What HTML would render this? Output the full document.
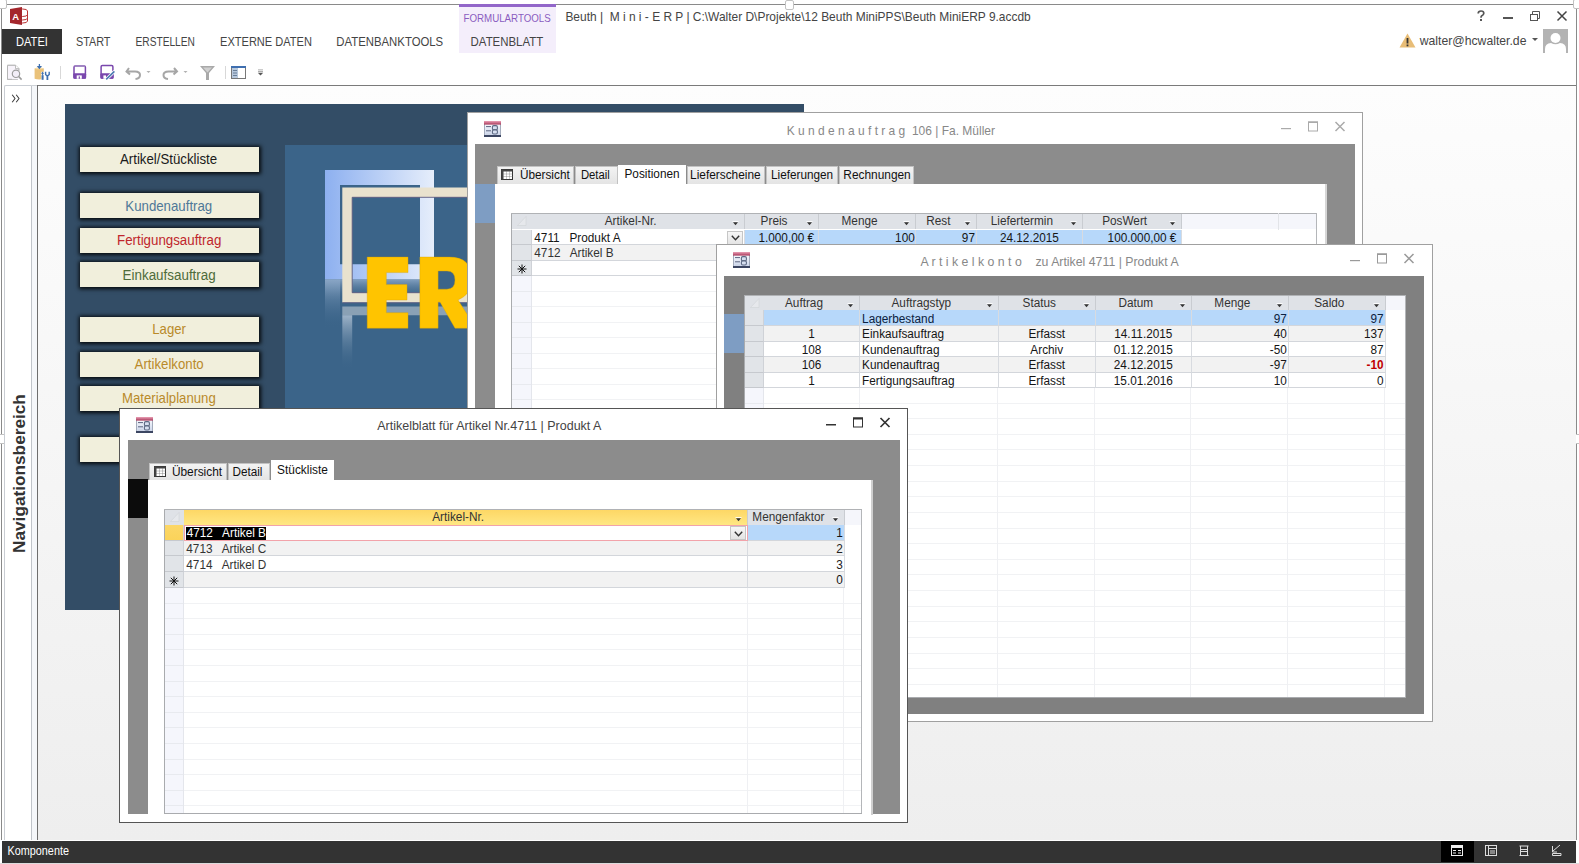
<!DOCTYPE html><html><head><meta charset="utf-8"><style>
*{margin:0;padding:0;box-sizing:border-box}
html,body{width:1579px;height:864px;overflow:hidden;background:#fff;font-family:"Liberation Sans",sans-serif;color:#222}
div{position:absolute}
svg{position:absolute}
.t{white-space:pre;transform-origin:0 0}
</style></head><body><div style="left:0px;top:4px;width:1578px;height:1px;background:#8a8a8a"></div><div style="left:1px;top:4px;width:1px;height:836px;background:#8a8a8a"></div><div style="left:1576px;top:4px;width:1px;height:836px;background:#8a8a8a"></div><div style="left:-3px;top:-1px;width:9.5px;height:10px;background:#fff;border:1.5px solid #c2c2c2;border-radius:2px"></div><div style="left:784.5px;top:-0.5px;width:9.5px;height:10px;background:#fff;border:1.5px solid #c2c2c2;border-radius:2px"></div><div style="left:1572.5px;top:-1px;width:9.5px;height:10px;background:#fff;border:1.5px solid #c2c2c2;border-radius:2px"></div><div style="left:-3px;top:433.5px;width:9.5px;height:10px;background:#fff;border:1.5px solid #c2c2c2;border-radius:2px"></div><div style="left:1572.5px;top:433.5px;width:9.5px;height:10px;background:#fff;border:1.5px solid #c2c2c2;border-radius:2px"></div><svg style="left:9px;top:6px" width="20" height="20" viewBox="0 0 20 20">
<ellipse cx="13.5" cy="5" rx="5" ry="2" fill="#fff" stroke="#b33" stroke-width="1"/>
<path d="M8.5 5 v10 a5 2 0 0 0 10 0 v-10" fill="#fff" stroke="#b33" stroke-width="1"/>
<path d="M8.5 8.5 a5 2 0 0 0 10 0 M8.5 12 a5 2 0 0 0 10 0" fill="none" stroke="#b33" stroke-width="1"/>
<path d="M1 3 L13 1 V19 L1 17 Z" fill="#a4262c"/>
<text x="3.3" y="13.5" font-family="Liberation Sans" font-weight="bold" font-size="9.5" fill="#fff">A</text>
</svg><svg style="left:0;top:0;overflow:visible" width="1" height="1"><text transform="translate(565.40,21.40) scale(0.9059,1.000)" font-family="Liberation Sans" font-size="13.2" fill="#444" style="white-space:pre">Beuth |  M i n i - E R P | C:\Walter D\Projekte\12 Beuth MiniPPS\Beuth MiniERP 9.accdb</text></svg><div style="left:459px;top:4px;width:97px;height:49px;background:#f4eefb"></div><div style="left:459px;top:4px;width:97px;height:3px;background:#9266c9"></div><svg style="left:0;top:0;overflow:visible" width="1" height="1"><text transform="translate(463.50,21.60) scale(0.9027,1.000)" font-family="Liberation Sans" font-size="10.8" fill="#8a5cc0" style="white-space:pre">FORMULARTOOLS</text></svg><div style="left:2px;top:29px;width:60px;height:25px;background:#333"></div><svg style="left:0;top:0;overflow:visible" width="1" height="1"><text transform="translate(16.00,46.00) scale(0.8892,1.000)" font-family="Liberation Sans" font-size="12.5" fill="#fff" style="white-space:pre">DATEI</text></svg><svg style="left:0;top:0;overflow:visible" width="1" height="1"><text transform="translate(76.00,45.80) scale(0.8666,1.000)" font-family="Liberation Sans" font-size="12.5" fill="#444" style="white-space:pre">START</text></svg><svg style="left:0;top:0;overflow:visible" width="1" height="1"><text transform="translate(135.50,45.80) scale(0.8158,1.000)" font-family="Liberation Sans" font-size="12.5" fill="#444" style="white-space:pre">ERSTELLEN</text></svg><svg style="left:0;top:0;overflow:visible" width="1" height="1"><text transform="translate(220.00,45.80) scale(0.8851,1.000)" font-family="Liberation Sans" font-size="12.5" fill="#444" style="white-space:pre">EXTERNE DATEN</text></svg><svg style="left:0;top:0;overflow:visible" width="1" height="1"><text transform="translate(336.30,45.80) scale(0.9097,1.000)" font-family="Liberation Sans" font-size="12.5" fill="#444" style="white-space:pre">DATENBANKTOOLS</text></svg><svg style="left:0;top:0;overflow:visible" width="1" height="1"><text transform="translate(470.60,45.80) scale(0.9155,1.000)" font-family="Liberation Sans" font-size="12.5" fill="#444" style="white-space:pre">DATENBLATT</text></svg><svg style="left:1476px;top:10px" width="10" height="12" viewBox="0 0 10 12"><path d="M2.2 3.5 Q2.2 1 5 1 Q7.8 1 7.8 3.3 Q7.8 4.8 5.8 5.8 Q5 6.3 5 7.8" fill="none" stroke="#555" stroke-width="1.7"/><rect x="4" y="9" width="2" height="2" fill="#555"/></svg><div style="left:1503px;top:17px;width:10px;height:2px;background:#555"></div><svg style="left:1529px;top:10px" width="12" height="12" viewBox="0 0 12 12"><rect x="1.5" y="4.5" width="7" height="6" fill="#fff" stroke="#555"/><path d="M3.5 4.5 V1.5 H10.5 V8.5 H8.5" fill="none" stroke="#555"/></svg><svg style="left:1556px;top:10px" width="12" height="12" viewBox="0 0 12 12"><path d="M1.5 1.5 L10.5 10.5 M10.5 1.5 L1.5 10.5" stroke="#444" stroke-width="1.5"/></svg><svg style="left:1399px;top:33px" width="17" height="15" viewBox="0 0 17 15"><path d="M8.5 0.5 L16.5 14.5 H0.5 Z" fill="#e8bd77"/><rect x="7.6" y="5" width="1.8" height="5.5" fill="#333"/><rect x="7.6" y="11.5" width="1.8" height="1.8" fill="#333"/></svg><svg style="left:0;top:0;overflow:visible" width="1" height="1"><text transform="translate(1419.73,44.90) scale(0.9394,1.000)" font-family="Liberation Sans" font-size="13" fill="#444" style="white-space:pre">walter@hcwalter.de</text></svg><svg style="left:1532px;top:38px" width="6" height="4" viewBox="0 0 6 4"><path d="M0 0 H6 L3 3 Z" fill="#555"/></svg><svg style="left:1543px;top:29px" width="25" height="24" viewBox="0 0 25 24"><rect width="25" height="24" fill="#b3b3b3"/><circle cx="12.5" cy="9" r="5" fill="#fff"/><path d="M2 24 V20 Q2 14.5 8 14 Q12.5 16.5 17 14 Q23 14.5 23 20 V24 Z" fill="#fff"/></svg><svg style="left:0;top:58px" width="270" height="26" viewBox="0 58 270 26">
<path d="M7.5 65.3 H15.5 L18.8 68.6 V71 M17.8 79.3 H7.5 Z" fill="#f8f4fb" stroke="#b5b5b5" stroke-width="1"/>
<path d="M7.5 65.3 H15.5 L18.8 68.6 V79.3 H7.5 Z" fill="#f8f4fb"/>
<path d="M7.5 65.3 H15.5 L18.8 68.6 V70.5 M7.5 65.3 V79.3 H12" fill="none" stroke="#b5b5b5" stroke-width="1"/>
<path d="M15.5 65.3 V68.6 H18.8" fill="#fff" stroke="#b5b5b5" stroke-width="0.9"/>
<circle cx="16" cy="73.8" r="3.7" fill="#f3eef8" stroke="#9c9c9c" stroke-width="1.2"/>
<path d="M18.7 76.5 L21.6 79.6" stroke="#9c9c9c" stroke-width="1.6"/>
<path d="M34.6 68.4 Q39.2 66.6 43.8 68.4 V78.8 Q39.2 80.2 34.6 78.8 Z" fill="#eac27a"/>
<path d="M34.6 68.4 Q39.2 66.6 43.8 68.4 Q39.2 70.2 34.6 68.4 Z" fill="#f5dcaa"/>
<path d="M39.4 64 V68.2" stroke="#3d6fb0" stroke-width="1.3"/>
<path d="M36.8 66 L39.4 69.2 L42 66 Z" fill="#3d6fb0"/>
<path d="M42.6 71.8 V80" stroke="#fff" stroke-width="2.6"/>
<path d="M42.6 71.8 V75.5" stroke="#3d6fb0" stroke-width="1"/>
<path d="M42.6 75.2 V79.8" stroke="#3d6fb0" stroke-width="2"/>
<path d="M41.2 73.3 H44" stroke="#3d6fb0" stroke-width="0.8"/>
<path d="M45.6 71.8 V74.5 Q47.4 76.8 49.2 74.5 V71.8" fill="none" stroke="#3d6fb0" stroke-width="1.4"/>
<path d="M47.4 76 V80" stroke="#3d6fb0" stroke-width="1.8"/>
<rect x="60" y="66" width="1" height="13" fill="#d8d8d8"/>
<rect x="74" y="66.1" width="11.4" height="12" rx="1.2" fill="#fff" stroke="#7a47ad" stroke-width="1.5"/>
<path d="M74.5 66.1 H85" stroke="#a58cc4" stroke-width="1.5"/>
<rect x="73.3" y="73.2" width="12.8" height="5.6" rx="1" fill="#7a47ad"/>
<rect x="76.7" y="75.4" width="5.1" height="3.4" fill="#fff"/>
<rect x="78.7" y="76.4" width="1.2" height="2.4" fill="#7a47ad"/>
<rect x="101.1" y="65.6" width="11.8" height="12.5" rx="1.2" fill="#fff" stroke="#7a47ad" stroke-width="1.5"/>
<rect x="100.4" y="73.2" width="13.2" height="5.6" rx="1" fill="#7a47ad"/>
<rect x="103.4" y="75.4" width="2.6" height="3.4" fill="#fff"/>
<path d="M106 79.6 L114.6 71.2" stroke="#fff" stroke-width="3.2"/>
<path d="M106.2 79.4 L114.4 71.4" stroke="#4a78b0" stroke-width="1.5"/>
<path d="M129 68 L126.5 71.5 L130 74.5 M127 71.5 H135 Q140 71.5 140 75 Q140 78.5 135.5 79" fill="none" stroke="#a6a6a6" stroke-width="2"/>
<path d="M146.5 71 H150.5 L148.5 73 Z" fill="#b0b0b0"/>
<path d="M174 68 L177 71.5 L173.5 74.5 M176.5 71.5 H168.5 Q163.5 71.5 163.5 75 Q163.5 78.5 168 79" fill="none" stroke="#a6a6a6" stroke-width="2"/>
<path d="M183.5 71 H187.5 L185.5 73 Z" fill="#b0b0b0"/>
<path d="M200 66 H215 L209 73 V80 H206 V73 Z" fill="#a9a9a9"/>
<path d="M203 67.5 H212 L207.5 72.5 Z" fill="#d0d0d0"/>
<rect x="225" y="66" width="1" height="13" fill="#d8d8d8"/>
<rect x="231.5" y="66.5" width="14" height="12" fill="#fff" stroke="#777"/>
<rect x="231" y="66" width="15" height="2" fill="#3f6fb0"/>
<rect x="232" y="68" width="6" height="10" fill="#b8c9dd"/>
<path d="M233 70.5 H237 M233 73 H237 M233 75.5 H237" stroke="#6a7f99" stroke-width="1"/>
<rect x="258" y="69.5" width="5" height="0.8" fill="#9a9a9a"/>
<rect x="258" y="71.2" width="5" height="0.8" fill="#9a9a9a"/>
<path d="M257.8 72.8 H263.2 L260.5 75.6 Z" fill="#555"/>
</svg><div style="left:37px;top:85px;width:1539px;height:1px;background:#7a7a7a"></div><div style="left:4px;top:85px;width:28px;height:755px;background:#fff;border-left:1px solid #c9cdd3;border-top:1.5px solid #c9cdd3;border-right:1px solid #c0c4ca;border-top-left-radius:2px"></div><div style="left:32px;top:85px;width:5px;height:755px;background:#f5f7fa;border-top:1.5px solid #cfd3d8"></div><div style="left:36.5px;top:85px;width:1.5px;height:755px;background:#6e6e6e"></div><svg style="left:11px;top:94px" width="10" height="9" viewBox="0 0 10 9"><path d="M1.2 0.8 Q2.5 2.5 4 4.5 Q2.5 6.5 1.2 8.2 M5.2 0.8 Q6.5 2.5 8 4.5 Q6.5 6.5 5.2 8.2" fill="none" stroke="#3a3a3a" stroke-width="1.05"/></svg><div style="left:25px;top:553px;width:0;height:0;transform:rotate(-90deg);transform-origin:0 0"><svg style="left:0;top:0;overflow:visible" width="1" height="1"><text transform="translate(0.00,0.00) scale(1.0021,1.000)" font-family="Liberation Sans" font-size="17.2" fill="#333" font-weight="bold" style="white-space:pre">Navigationsbereich</text></svg></div><div style="left:38px;top:86px;width:1538px;height:754px;background:linear-gradient(#fdfdfd,#eeeeee)"></div><div style="left:2px;top:840.5px;width:1574px;height:22px;background:#333"></div><div style="left:0px;top:862.5px;width:1579px;height:1.5px;background:#dcdcdc"></div><svg style="left:0;top:0;overflow:visible" width="1" height="1"><text transform="translate(7.60,855.20) scale(0.8876,1.000)" font-family="Liberation Sans" font-size="12.2" fill="#fff" style="white-space:pre">Komponente</text></svg><div style="left:1441px;top:841px;width:33px;height:21px;background:#000"></div><svg style="left:1440px;top:840px" width="139" height="22" viewBox="1440 840 139 22">
<rect x="1451.5" y="845.5" width="11" height="10" fill="none" stroke="#eee"/>
<rect x="1452" y="846" width="10" height="2" fill="#eee"/>
<path d="M1453 850.5 H1456 M1458 850.5 H1461 M1453 853 H1456 M1458 853 H1461" stroke="#eee"/>
<rect x="1485.5" y="845.5" width="11" height="10" fill="none" stroke="#ddd"/>
<path d="M1488.5 846 V855 M1489 848.5 H1496 M1490 851 H1495 M1490 853 H1495" stroke="#ddd"/>
<path d="M1519.5 846 H1528.5 M1519.5 855.5 H1528.5 M1520.5 846 V855 M1527.5 846 V855 M1521 849.5 H1527 M1521 851.5 H1527" stroke="#ddd"/>
<path d="M1552.5 846 V852 L1557 852 M1553 851 L1560 845 M1552.5 853.5 H1561 V855.5 H1552.5 Z" fill="none" stroke="#ddd"/>
</svg><div style="left:65px;top:104px;width:739px;height:506px;background:#334d66"></div><div style="left:285px;top:145px;width:519px;height:465px;background:#3b6489"></div><svg style="left:285px;top:145px" width="519" height="465" viewBox="285 145 519 465">
<defs>
<linearGradient id="lb" x1="0" y1="0" x2="1" y2="0"><stop offset="0" stop-color="#8db0f0"/><stop offset="1" stop-color="#e6eefb"/></linearGradient>
<linearGradient id="rf" x1="0" y1="0" x2="0" y2="1"><stop offset="0" stop-color="#a9bccf" stop-opacity="0.9"/><stop offset="1" stop-color="#3b6489" stop-opacity="0"/></linearGradient>
<linearGradient id="rf2" x1="0" y1="0" x2="0" y2="1"><stop offset="0" stop-color="#8aa6c6" stop-opacity="0.9"/><stop offset="1" stop-color="#3b6489" stop-opacity="0"/></linearGradient>
</defs>
<path d="M325 170 H434 V279.4 H325 Z M340 185 V264.3 H420 V185 Z" fill="url(#lb)" fill-rule="evenodd"/>
<path d="M325 279.4 H434 V300 H325 Z" fill="url(#rf2)"/>
<path d="M325 279.4 H340 V328 H325 Z" fill="url(#rf2)"/>
<path d="M342.3 187.5 H520 V302.5 H342.3 Z M352.2 197.3 V292.7 H520 V197.3 Z" fill="#e9e2ce" fill-rule="evenodd"/>
<path d="M352.2 197.3 H520 M352.2 197.3 V292.7 H520 M342.3 302.8 H520" stroke="#5b5a80" stroke-width="0.9" fill="none"/>
<path d="M342.3 306.5 H520 V315.2 H342.3 Z" fill="#9fb0c0" opacity="0.8"/>
<path d="M342.3 315.2 H352.2 V370 H342.3 Z" fill="url(#rf)"/>
<path d="M367.2 257.1 H408 V272.6 H386.3 V284.6 H407 V300 H386.3 V312.7 H408 V328.2 H367.2 Z" fill="#ffc400" stroke="#d9a400" stroke-width="0.4"/>
<path d="M419.9 257.1 H449 Q472 257.1 472 279 Q472 294 458 300 L476 328.2 H455 L440 302 H438.1 V328.2 H419.9 Z M438.1 271 V289.2 H447 Q455 289.2 455 280 Q455 271 447 271 Z" fill="#ffc400" fill-rule="evenodd" stroke="#d9a400" stroke-width="0.4"/>
</svg><div style="left:80px;top:147px;width:179px;height:25px;background:#f1efdc;box-shadow:0 0 4px 1.5px rgba(0,0,0,0.9)"></div><svg style="left:0;top:0;overflow:visible" width="1" height="1"><text transform="translate(120.00,164.10) scale(0.9612,1.000)" font-family="Liberation Sans" font-size="13.8" fill="#1a1a1a" style="white-space:pre">Artikel/Stückliste</text></svg><div style="left:80px;top:193px;width:179px;height:25px;background:#f1efdc;box-shadow:0 0 4px 1.5px rgba(0,0,0,0.9)"></div><svg style="left:0;top:0;overflow:visible" width="1" height="1"><text transform="translate(125.30,211.20) scale(0.9618,1.000)" font-family="Liberation Sans" font-size="13.8" fill="#4f7898" style="white-space:pre">Kundenauftrag</text></svg><div style="left:80px;top:228px;width:179px;height:25px;background:#f1efdc;box-shadow:0 0 4px 1.5px rgba(0,0,0,0.9)"></div><svg style="left:0;top:0;overflow:visible" width="1" height="1"><text transform="translate(117.00,245.30) scale(0.9653,1.000)" font-family="Liberation Sans" font-size="13.8" fill="#c0262c" style="white-space:pre">Fertigungsauftrag</text></svg><div style="left:80px;top:262px;width:179px;height:25px;background:#f1efdc;box-shadow:0 0 4px 1.5px rgba(0,0,0,0.9)"></div><svg style="left:0;top:0;overflow:visible" width="1" height="1"><text transform="translate(122.60,279.50) scale(0.9717,1.000)" font-family="Liberation Sans" font-size="13.8" fill="#4e6b3a" style="white-space:pre">Einkaufsauftrag</text></svg><div style="left:80px;top:317px;width:179px;height:25px;background:#f1efdc;box-shadow:0 0 4px 1.5px rgba(0,0,0,0.9)"></div><svg style="left:0;top:0;overflow:visible" width="1" height="1"><text transform="translate(152.30,334.40) scale(0.9549,1.000)" font-family="Liberation Sans" font-size="13.8" fill="#b98a2a" style="white-space:pre">Lager</text></svg><div style="left:80px;top:352px;width:179px;height:25px;background:#f1efdc;box-shadow:0 0 4px 1.5px rgba(0,0,0,0.9)"></div><svg style="left:0;top:0;overflow:visible" width="1" height="1"><text transform="translate(134.60,368.75) scale(0.9590,1.000)" font-family="Liberation Sans" font-size="13.8" fill="#b98a2a" style="white-space:pre">Artikelkonto</text></svg><div style="left:80px;top:386px;width:179px;height:25px;background:#f1efdc;box-shadow:0 0 4px 1.5px rgba(0,0,0,0.9)"></div><svg style="left:0;top:0;overflow:visible" width="1" height="1"><text transform="translate(122.00,403.00) scale(0.9553,1.000)" font-family="Liberation Sans" font-size="13.8" fill="#b98a2a" style="white-space:pre">Materialplanung</text></svg><div style="left:80px;top:437px;width:179px;height:25px;background:#f1efdc;box-shadow:0 0 4px 1.5px rgba(0,0,0,0.9)"></div><div style="left:467px;top:112px;width:896px;height:604px;background:#fff;border:1px solid #a0a0a0"></div><svg style="left:484px;top:121px" width="17" height="16" viewBox="0 0 17 16"><defs><linearGradient id="fh1" x1="0" y1="0" x2="0" y2="1"><stop offset="0" stop-color="#eaa0b6"/><stop offset="1" stop-color="#a8385a"/></linearGradient><linearGradient id="fb1" x1="0" y1="0" x2="0" y2="1"><stop offset="0" stop-color="#ffffff"/><stop offset="1" stop-color="#c9d3ea"/></linearGradient></defs><rect x="0.5" y="0.5" width="16" height="15" fill="url(#fb1)" stroke="#a3abbb"/><rect x="0" y="0" width="17" height="3.6" fill="url(#fh1)"/><rect x="0" y="14" width="17" height="2" fill="#3c4662"/><path d="M2 5.6 H7 M2 9.8 H7" stroke="#5c6580" stroke-width="1"/><path d="M2 13 H7" stroke="#c8d0e0" stroke-width="0.8"/><rect x="8.4" y="4.6" width="5" height="4.3" rx="1.4" fill="#d6dff0" stroke="#5d6983" stroke-width="1.1"/><rect x="8.4" y="8.9" width="5" height="4.1" rx="1.4" fill="#d6dff0" stroke="#5d6983" stroke-width="1.1"/></svg><svg style="left:0;top:0;overflow:visible" width="1" height="1"><text transform="translate(786.70,134.80) scale(0.9219,1.000)" font-family="Liberation Sans" font-size="13" fill="#888" style="white-space:pre">K u n d e n a u f t r a g  106 | Fa. Müller</text></svg><svg style="left:1281px;top:121px" width="66" height="12" viewBox="0 0 66 12"><rect x="0" y="7" width="10" height="1.2" fill="#aaa"/><rect x="27.5" y="1" width="9" height="9" fill="none" stroke="#aaa" stroke-width="1"/><rect x="27" y="0.5" width="10" height="1.5" fill="#aaa"/><path d="M54.5 1 L63.5 10 M63.5 1 L54.5 10" stroke="#aaa" stroke-width="1.5"/></svg><div style="left:475px;top:144.4px;width:880px;height:564px;background:#8c8c8c"></div><div style="left:495px;top:184.4px;width:832px;height:520px;background:#fff;border-right:2px solid #d6d6d6"></div><div style="left:475px;top:184px;width:20px;height:39.4px;background:#7e9dc3"></div><div style="left:496.7px;top:166.3px;width:77.50000000000006px;height:18.099999999999994px;background:linear-gradient(#f3f3f3,#e4e4e4);border:1px solid #c2c2c2;border-bottom:none"></div><svg style="left:0;top:0;overflow:visible" width="1" height="1"><text transform="translate(519.90,179.40) scale(0.9602,1.050)" font-family="Liberation Sans" font-size="12.3" fill="#111" style="white-space:pre">Übersicht</text></svg><svg style="left:501px;top:169px" width="12" height="11" viewBox="0 0 12 11"><rect x="0.5" y="0.5" width="11" height="10" fill="#fff" stroke="#333"/><rect x="0.5" y="0.5" width="11" height="2" fill="#444"/><rect x="0.5" y="0.5" width="2" height="10" fill="#444"/><path d="M2.5 5 H11.5 M2.5 7.5 H11.5 M5.5 2.5 V10.5 M8.5 2.5 V10.5" stroke="#666" stroke-width="0.7" stroke-dasharray="1 1"/></svg><div style="left:575.4px;top:166.3px;width:42.700000000000045px;height:18.099999999999994px;background:linear-gradient(#f3f3f3,#e4e4e4);border:1px solid #c2c2c2;border-bottom:none"></div><svg style="left:0;top:0;overflow:visible" width="1" height="1"><text transform="translate(580.90,179.40) scale(0.9187,1.050)" font-family="Liberation Sans" font-size="12.3" fill="#111" style="white-space:pre">Detail</text></svg><div style="left:618.3px;top:164.7px;width:68.0px;height:20.30000000000001px;background:#fff"></div><svg style="left:0;top:0;overflow:visible" width="1" height="1"><text transform="translate(624.50,178.00) scale(0.9592,1.050)" font-family="Liberation Sans" font-size="12.3" fill="#111" style="white-space:pre">Positionen</text></svg><div style="left:686.6px;top:166.3px;width:78.60000000000002px;height:18.099999999999994px;background:linear-gradient(#f3f3f3,#e4e4e4);border:1px solid #c2c2c2;border-bottom:none"></div><svg style="left:0;top:0;overflow:visible" width="1" height="1"><text transform="translate(690.10,179.40) scale(0.9651,1.050)" font-family="Liberation Sans" font-size="12.3" fill="#111" style="white-space:pre">Lieferscheine</text></svg><div style="left:766.3px;top:166.3px;width:71.30000000000007px;height:18.099999999999994px;background:linear-gradient(#f3f3f3,#e4e4e4);border:1px solid #c2c2c2;border-bottom:none"></div><svg style="left:0;top:0;overflow:visible" width="1" height="1"><text transform="translate(771.00,179.40) scale(0.9573,1.050)" font-family="Liberation Sans" font-size="12.3" fill="#111" style="white-space:pre">Lieferungen</text></svg><div style="left:838.6px;top:166.3px;width:75.39999999999998px;height:18.099999999999994px;background:linear-gradient(#f3f3f3,#e4e4e4);border:1px solid #c2c2c2;border-bottom:none"></div><svg style="left:0;top:0;overflow:visible" width="1" height="1"><text transform="translate(843.30,179.40) scale(0.9674,1.050)" font-family="Liberation Sans" font-size="12.3" fill="#111" style="white-space:pre">Rechnungen</text></svg><div style="left:511.2px;top:213.3px;width:805.3px;height:486.7px;background:#fff"></div><div style="left:512.2px;top:213.3px;width:804.3px;height:16.19999999999999px;background:#f5f6fb"></div><div style="left:512.2px;top:213.3px;width:20.199999999999967px;height:16.19999999999999px;background:#dfe2e7"></div><svg style="left:517.2px;top:216.3px" width="10" height="10" viewBox="0 0 10 10"><path d="M9 0.5 L0.5 9.5 H9 Z" fill="#e6e8ec" stroke="#d0d3d7" stroke-width="0.6"/></svg><div style="left:532.4px;top:213.3px;width:212.70000000000005px;height:16.19999999999999px;background:#dfe2e7;border-right:1px solid #c9ccd1"></div><svg style="left:0;top:0;overflow:visible" width="1" height="1"><text transform="translate(604.75,225.00) scale(1.0000,1.090)" font-family="Liberation Sans" font-size="11.8" fill="#333" style="white-space:pre">Artikel-Nr.</text></svg><svg style="left:732.2px;top:220.70000000000002px" width="7" height="5" viewBox="0 0 7 5"><rect x="0.5" y="0" width="6" height="1" fill="#fff" opacity="0.9"/><path d="M1 1.2 H6 L3.5 4.2 Z" fill="#333"/></svg><div style="left:745.1px;top:213.3px;width:74.10000000000002px;height:16.19999999999999px;background:#dfe2e7;border-right:1px solid #c9ccd1"></div><svg style="left:0;top:0;overflow:visible" width="1" height="1"><text transform="translate(760.61,225.00) scale(1.0000,1.090)" font-family="Liberation Sans" font-size="11.8" fill="#333" style="white-space:pre">Preis</text></svg><svg style="left:806.3000000000001px;top:220.70000000000002px" width="7" height="5" viewBox="0 0 7 5"><rect x="0.5" y="0" width="6" height="1" fill="#fff" opacity="0.9"/><path d="M1 1.2 H6 L3.5 4.2 Z" fill="#333"/></svg><div style="left:819.2px;top:213.3px;width:96.89999999999998px;height:16.19999999999999px;background:#dfe2e7;border-right:1px solid #c9ccd1"></div><svg style="left:0;top:0;overflow:visible" width="1" height="1"><text transform="translate(841.51,225.00) scale(1.0000,1.090)" font-family="Liberation Sans" font-size="11.8" fill="#333" style="white-space:pre">Menge</text></svg><svg style="left:903.2px;top:220.70000000000002px" width="7" height="5" viewBox="0 0 7 5"><rect x="0.5" y="0" width="6" height="1" fill="#fff" opacity="0.9"/><path d="M1 1.2 H6 L3.5 4.2 Z" fill="#333"/></svg><div style="left:916.1px;top:213.3px;width:60.700000000000045px;height:16.19999999999999px;background:#dfe2e7;border-right:1px solid #c9ccd1"></div><svg style="left:0;top:0;overflow:visible" width="1" height="1"><text transform="translate(926.23,225.00) scale(1.0000,1.090)" font-family="Liberation Sans" font-size="11.8" fill="#333" style="white-space:pre">Rest</text></svg><svg style="left:963.9000000000001px;top:220.70000000000002px" width="7" height="5" viewBox="0 0 7 5"><rect x="0.5" y="0" width="6" height="1" fill="#fff" opacity="0.9"/><path d="M1 1.2 H6 L3.5 4.2 Z" fill="#333"/></svg><div style="left:976.8000000000001px;top:213.3px;width:106.5px;height:16.19999999999999px;background:#dfe2e7;border-right:1px solid #c9ccd1"></div><svg style="left:0;top:0;overflow:visible" width="1" height="1"><text transform="translate(990.80,225.00) scale(1.0000,1.090)" font-family="Liberation Sans" font-size="11.8" fill="#333" style="white-space:pre">Liefertermin</text></svg><svg style="left:1070.4px;top:220.70000000000002px" width="7" height="5" viewBox="0 0 7 5"><rect x="0.5" y="0" width="6" height="1" fill="#fff" opacity="0.9"/><path d="M1 1.2 H6 L3.5 4.2 Z" fill="#333"/></svg><div style="left:1083.3px;top:213.3px;width:98.89999999999986px;height:16.19999999999999px;background:#dfe2e7;border-right:1px solid #c9ccd1"></div><svg style="left:0;top:0;overflow:visible" width="1" height="1"><text transform="translate(1102.14,225.00) scale(1.0000,1.090)" font-family="Liberation Sans" font-size="11.8" fill="#333" style="white-space:pre">PosWert</text></svg><svg style="left:1169.3px;top:220.70000000000002px" width="7" height="5" viewBox="0 0 7 5"><rect x="0.5" y="0" width="6" height="1" fill="#fff" opacity="0.9"/><path d="M1 1.2 H6 L3.5 4.2 Z" fill="#333"/></svg><div style="left:512.2px;top:230px;width:20.199999999999967px;height:15px;background:#e1e4e8;border-bottom:1px solid #c6c9ce;border-right:1px solid #cfd2d7"></div><div style="left:532.4px;top:230px;width:212.70000000000005px;height:15px;background:#fff;border-right:1px solid #d8dbe0;border-bottom:1px solid #d3d6db"></div><svg style="left:0;top:0;overflow:visible" width="1" height="1"><text transform="translate(534.30,241.60) scale(1.0000,1.090)" font-family="Liberation Sans" font-size="11.8" fill="#151515" style="white-space:pre">4711   Produkt A</text></svg><div style="left:745.1px;top:230px;width:74.10000000000002px;height:15px;background:#b7d8fa;border-right:1px solid #d8dbe0;border-bottom:1px solid #d3d6db"></div><svg style="left:0;top:0;overflow:visible" width="1" height="1"><text transform="translate(758.42,241.60) scale(1.0000,1.090)" font-family="Liberation Sans" font-size="11.8" fill="#151515" style="white-space:pre">1.000,00 €</text></svg><div style="left:819.2px;top:230px;width:96.89999999999998px;height:15px;background:#b7d8fa;border-right:1px solid #d8dbe0;border-bottom:1px solid #d3d6db"></div><svg style="left:0;top:0;overflow:visible" width="1" height="1"><text transform="translate(895.12,241.60) scale(1.0000,1.090)" font-family="Liberation Sans" font-size="11.8" fill="#151515" style="white-space:pre">100</text></svg><div style="left:916.1px;top:230px;width:60.700000000000045px;height:15px;background:#b7d8fa;border-right:1px solid #d8dbe0;border-bottom:1px solid #d3d6db"></div><svg style="left:0;top:0;overflow:visible" width="1" height="1"><text transform="translate(961.87,241.60) scale(1.0000,1.090)" font-family="Liberation Sans" font-size="11.8" fill="#151515" style="white-space:pre">97</text></svg><div style="left:976.8000000000001px;top:230px;width:106.5px;height:15px;background:#b7d8fa;border-right:1px solid #d8dbe0;border-bottom:1px solid #d3d6db"></div><svg style="left:0;top:0;overflow:visible" width="1" height="1"><text transform="translate(999.92,241.60) scale(1.0000,1.090)" font-family="Liberation Sans" font-size="11.8" fill="#151515" style="white-space:pre">24.12.2015</text></svg><div style="left:1083.3px;top:230px;width:98.89999999999986px;height:15px;background:#b7d8fa;border-right:1px solid #d8dbe0;border-bottom:1px solid #d3d6db"></div><svg style="left:0;top:0;overflow:visible" width="1" height="1"><text transform="translate(1107.59,241.60) scale(1.0000,1.090)" font-family="Liberation Sans" font-size="11.8" fill="#151515" style="white-space:pre">100.000,00 €</text></svg><div style="left:512.2px;top:245px;width:20.199999999999967px;height:16px;background:#e1e4e8;border-bottom:1px solid #c6c9ce;border-right:1px solid #cfd2d7"></div><div style="left:532.4px;top:245px;width:212.70000000000005px;height:16px;background:#f2f2f2;border-right:1px solid #d8dbe0;border-bottom:1px solid #d3d6db"></div><svg style="left:0;top:0;overflow:visible" width="1" height="1"><text transform="translate(534.30,257.15) scale(1.0000,1.090)" font-family="Liberation Sans" font-size="11.8" fill="#333" style="white-space:pre">4712   Artikel B</text></svg><div style="left:745.1px;top:245px;width:74.10000000000002px;height:16px;background:#f2f2f2;border-right:1px solid #d8dbe0;border-bottom:1px solid #d3d6db"></div><div style="left:819.2px;top:245px;width:96.89999999999998px;height:16px;background:#f2f2f2;border-right:1px solid #d8dbe0;border-bottom:1px solid #d3d6db"></div><div style="left:916.1px;top:245px;width:60.700000000000045px;height:16px;background:#f2f2f2;border-right:1px solid #d8dbe0;border-bottom:1px solid #d3d6db"></div><div style="left:976.8000000000001px;top:245px;width:106.5px;height:16px;background:#f2f2f2;border-right:1px solid #d8dbe0;border-bottom:1px solid #d3d6db"></div><div style="left:1083.3px;top:245px;width:98.89999999999986px;height:16px;background:#f2f2f2;border-right:1px solid #d8dbe0;border-bottom:1px solid #d3d6db"></div><div style="left:512.2px;top:261px;width:20.199999999999967px;height:15px;background:#e1e4e8;border-bottom:1px solid #c6c9ce;border-right:1px solid #cfd2d7"></div><svg style="left:516.5px;top:263.975px" width="10" height="10" viewBox="0 0 10 10"><path d="M5 0.5 V9.5 M0.5 5 H9.5 M1.8 1.8 L8.2 8.2 M8.2 1.8 L1.8 8.2" stroke="#111" stroke-width="1"/></svg><div style="left:532.4px;top:261px;width:212.70000000000005px;height:15px;background:#fff;border-right:1px solid #d8dbe0;border-bottom:1px solid #d3d6db"></div><div style="left:745.1px;top:261px;width:74.10000000000002px;height:15px;background:#fff;border-right:1px solid #d8dbe0;border-bottom:1px solid #d3d6db"></div><div style="left:819.2px;top:261px;width:96.89999999999998px;height:15px;background:#fff;border-right:1px solid #d8dbe0;border-bottom:1px solid #d3d6db"></div><div style="left:916.1px;top:261px;width:60.700000000000045px;height:15px;background:#fff;border-right:1px solid #d8dbe0;border-bottom:1px solid #d3d6db"></div><div style="left:976.8000000000001px;top:261px;width:106.5px;height:15px;background:#fff;border-right:1px solid #d8dbe0;border-bottom:1px solid #d3d6db"></div><div style="left:1083.3px;top:261px;width:98.89999999999986px;height:15px;background:#fff;border-right:1px solid #d8dbe0;border-bottom:1px solid #d3d6db"></div><div style="left:512.2px;top:276px;width:19.599999999999966px;height:424px;background:repeating-linear-gradient(#f5f6fc 0,#f5f6fc 14.55px,#e8eaef 14.55px,#e8eaef 15.55px);border-right:1px solid #e4e6ec"></div><div style="left:531.8px;top:276px;width:784.7px;height:424px;background:repeating-linear-gradient(#fff 0,#fff 14.55px,#f1f2f4 14.55px,#f1f2f4 15.55px)"></div><div style="left:743.5px;top:276px;width:1px;height:424px;background:#eff0f3"></div><div style="left:817.6px;top:276px;width:1px;height:424px;background:#eff0f3"></div><div style="left:914.5px;top:276px;width:1px;height:424px;background:#eff0f3"></div><div style="left:975.2px;top:276px;width:1px;height:424px;background:#eff0f3"></div><div style="left:1081.7px;top:276px;width:1px;height:424px;background:#eff0f3"></div><div style="left:1180.6px;top:276px;width:1px;height:424px;background:#eff0f3"></div><div style="left:511.2px;top:213.3px;width:1px;height:486.7px;background:#a9abae"></div><div style="left:1315.5px;top:213.3px;width:1px;height:486.7px;background:#b4b6b9"></div><div style="left:511.2px;top:699px;width:805.3px;height:1px;background:#a9abae"></div><div style="left:511.2px;top:213.3px;width:805.3px;height:1px;background:#b0b2b5"></div><div style="left:727.4px;top:230.5px;width:16px;height:14px;background:linear-gradient(#f7f7f7,#e4e4e4);border:1px solid #c6c6c6"><svg style="left:3px;top:3.5px" width="9" height="6" viewBox="0 0 9 6"><path d="M0.8 0.8 L4.5 4.8 L8.2 0.8" fill="none" stroke="#333" stroke-width="1.4"/></svg></div><div style="left:1278px;top:213.3px;width:1px;height:16.3px;background:#e2e4e8"></div><div style="left:716px;top:244px;width:717px;height:478px;background:#fff;border:1px solid #a0a0a0"></div><svg style="left:733px;top:252px" width="17" height="16" viewBox="0 0 17 16"><defs><linearGradient id="fh2" x1="0" y1="0" x2="0" y2="1"><stop offset="0" stop-color="#eaa0b6"/><stop offset="1" stop-color="#a8385a"/></linearGradient><linearGradient id="fb2" x1="0" y1="0" x2="0" y2="1"><stop offset="0" stop-color="#ffffff"/><stop offset="1" stop-color="#c9d3ea"/></linearGradient></defs><rect x="0.5" y="0.5" width="16" height="15" fill="url(#fb2)" stroke="#a3abbb"/><rect x="0" y="0" width="17" height="3.6" fill="url(#fh2)"/><rect x="0" y="14" width="17" height="2" fill="#3c4662"/><path d="M2 5.6 H7 M2 9.8 H7" stroke="#5c6580" stroke-width="1"/><path d="M2 13 H7" stroke="#c8d0e0" stroke-width="0.8"/><rect x="8.4" y="4.6" width="5" height="4.3" rx="1.4" fill="#d6dff0" stroke="#5d6983" stroke-width="1.1"/><rect x="8.4" y="8.9" width="5" height="4.1" rx="1.4" fill="#d6dff0" stroke="#5d6983" stroke-width="1.1"/></svg><svg style="left:0;top:0;overflow:visible" width="1" height="1"><text transform="translate(920.50,265.50) scale(0.9628,1.000)" font-family="Liberation Sans" font-size="12.8" fill="#888" style="white-space:pre">A r t i k e l k o n t o    zu Artikel 4711 | Produkt A</text></svg><svg style="left:1350px;top:253px" width="66" height="12" viewBox="0 0 66 12"><rect x="0" y="7" width="10" height="1.2" fill="#9a9a9a"/><rect x="27.5" y="1" width="9" height="9" fill="none" stroke="#9a9a9a" stroke-width="1"/><rect x="27" y="0.5" width="10" height="1.5" fill="#9a9a9a"/><path d="M54.5 1 L63.5 10 M63.5 1 L54.5 10" stroke="#9a9a9a" stroke-width="1.5"/></svg><div style="left:724.4px;top:275.7px;width:699.6px;height:438px;background:#808080"></div><div style="left:724.4px;top:313.7px;width:20px;height:39.5px;background:#7e9dc3"></div><div style="left:744px;top:295.3px;width:661.5px;height:402.7px;background:#fff"></div><div style="left:745px;top:295.3px;width:660.5px;height:15.099999999999966px;background:#f5f6fb"></div><div style="left:745px;top:295.3px;width:19.1px;height:15.099999999999966px;background:#dfe2e7"></div><svg style="left:750px;top:298.3px" width="10" height="10" viewBox="0 0 10 10"><path d="M9 0.5 L0.5 9.5 H9 Z" fill="#e6e8ec" stroke="#d0d3d7" stroke-width="0.6"/></svg><div style="left:764.1px;top:295.3px;width:96.0px;height:15.099999999999966px;background:#dfe2e7;border-right:1px solid #c9ccd1"></div><svg style="left:0;top:0;overflow:visible" width="1" height="1"><text transform="translate(784.97,307.00) scale(1.0000,1.090)" font-family="Liberation Sans" font-size="11.8" fill="#333" style="white-space:pre">Auftrag</text></svg><svg style="left:847.2px;top:302.7px" width="7" height="5" viewBox="0 0 7 5"><rect x="0.5" y="0" width="6" height="1" fill="#fff" opacity="0.9"/><path d="M1 1.2 H6 L3.5 4.2 Z" fill="#333"/></svg><div style="left:860.1px;top:295.3px;width:138.70000000000005px;height:15.099999999999966px;background:#dfe2e7;border-right:1px solid #c9ccd1"></div><svg style="left:0;top:0;overflow:visible" width="1" height="1"><text transform="translate(891.51,307.00) scale(1.0000,1.090)" font-family="Liberation Sans" font-size="11.8" fill="#333" style="white-space:pre">Auftragstyp</text></svg><svg style="left:985.9000000000001px;top:302.7px" width="7" height="5" viewBox="0 0 7 5"><rect x="0.5" y="0" width="6" height="1" fill="#fff" opacity="0.9"/><path d="M1 1.2 H6 L3.5 4.2 Z" fill="#333"/></svg><div style="left:998.8000000000001px;top:295.3px;width:97.09999999999991px;height:15.099999999999966px;background:#dfe2e7;border-right:1px solid #c9ccd1"></div><svg style="left:0;top:0;overflow:visible" width="1" height="1"><text transform="translate(1022.52,307.00) scale(1.0000,1.090)" font-family="Liberation Sans" font-size="11.8" fill="#333" style="white-space:pre">Status</text></svg><svg style="left:1083.0px;top:302.7px" width="7" height="5" viewBox="0 0 7 5"><rect x="0.5" y="0" width="6" height="1" fill="#fff" opacity="0.9"/><path d="M1 1.2 H6 L3.5 4.2 Z" fill="#333"/></svg><div style="left:1095.8999999999999px;top:295.3px;width:96.10000000000014px;height:15.099999999999966px;background:#dfe2e7;border-right:1px solid #c9ccd1"></div><svg style="left:0;top:0;overflow:visible" width="1" height="1"><text transform="translate(1118.47,307.00) scale(1.0000,1.090)" font-family="Liberation Sans" font-size="11.8" fill="#333" style="white-space:pre">Datum</text></svg><svg style="left:1179.1000000000001px;top:302.7px" width="7" height="5" viewBox="0 0 7 5"><rect x="0.5" y="0" width="6" height="1" fill="#fff" opacity="0.9"/><path d="M1 1.2 H6 L3.5 4.2 Z" fill="#333"/></svg><div style="left:1192.0px;top:295.3px;width:97.0px;height:15.099999999999966px;background:#dfe2e7;border-right:1px solid #c9ccd1"></div><svg style="left:0;top:0;overflow:visible" width="1" height="1"><text transform="translate(1214.36,307.00) scale(1.0000,1.090)" font-family="Liberation Sans" font-size="11.8" fill="#333" style="white-space:pre">Menge</text></svg><svg style="left:1276.1000000000001px;top:302.7px" width="7" height="5" viewBox="0 0 7 5"><rect x="0.5" y="0" width="6" height="1" fill="#fff" opacity="0.9"/><path d="M1 1.2 H6 L3.5 4.2 Z" fill="#333"/></svg><div style="left:1289.0px;top:295.3px;width:96.79999999999995px;height:15.099999999999966px;background:#dfe2e7;border-right:1px solid #c9ccd1"></div><svg style="left:0;top:0;overflow:visible" width="1" height="1"><text transform="translate(1314.21,307.00) scale(1.0000,1.090)" font-family="Liberation Sans" font-size="11.8" fill="#333" style="white-space:pre">Saldo</text></svg><svg style="left:1372.9px;top:302.7px" width="7" height="5" viewBox="0 0 7 5"><rect x="0.5" y="0" width="6" height="1" fill="#fff" opacity="0.9"/><path d="M1 1.2 H6 L3.5 4.2 Z" fill="#333"/></svg><div style="left:745px;top:310px;width:19.1px;height:16px;background:#e1e4e8;border-bottom:1px solid #c6c9ce;border-right:1px solid #cfd2d7"></div><div style="left:764.1px;top:310px;width:96.0px;height:16px;background:#b7d8fa;border-right:1px solid #d8dbe0;border-bottom:1px solid #d3d6db"></div><div style="left:860.1px;top:310px;width:138.70000000000005px;height:16px;background:#b7d8fa;border-right:1px solid #d8dbe0;border-bottom:1px solid #d3d6db"></div><svg style="left:0;top:0;overflow:visible" width="1" height="1"><text transform="translate(862.10,322.50) scale(1.0000,1.090)" font-family="Liberation Sans" font-size="11.8" fill="#0c2240" style="white-space:pre">Lagerbestand</text></svg><div style="left:998.8000000000001px;top:310px;width:97.09999999999991px;height:16px;background:#b7d8fa;border-right:1px solid #d8dbe0;border-bottom:1px solid #d3d6db"></div><div style="left:1095.8999999999999px;top:310px;width:96.10000000000014px;height:16px;background:#b7d8fa;border-right:1px solid #d8dbe0;border-bottom:1px solid #d3d6db"></div><div style="left:1192.0px;top:310px;width:97.0px;height:16px;background:#b7d8fa;border-right:1px solid #d8dbe0;border-bottom:1px solid #d3d6db"></div><svg style="left:0;top:0;overflow:visible" width="1" height="1"><text transform="translate(1273.67,322.50) scale(1.0000,1.090)" font-family="Liberation Sans" font-size="11.8" fill="#0c2240" style="white-space:pre">97</text></svg><div style="left:1289.0px;top:310px;width:96.79999999999995px;height:16px;background:#b7d8fa;border-right:1px solid #d8dbe0;border-bottom:1px solid #d3d6db"></div><svg style="left:0;top:0;overflow:visible" width="1" height="1"><text transform="translate(1370.47,322.50) scale(1.0000,1.090)" font-family="Liberation Sans" font-size="11.8" fill="#0c2240" style="white-space:pre">97</text></svg><div style="left:745px;top:326px;width:19.1px;height:16px;background:#e1e4e8;border-bottom:1px solid #c6c9ce;border-right:1px solid #cfd2d7"></div><div style="left:764.1px;top:326px;width:96.0px;height:16px;background:#f2f2f2;border-right:1px solid #d8dbe0;border-bottom:1px solid #d3d6db"></div><svg style="left:0;top:0;overflow:visible" width="1" height="1"><text transform="translate(808.23,338.12) scale(1.0000,1.090)" font-family="Liberation Sans" font-size="11.8" fill="#151515" style="white-space:pre">1</text></svg><div style="left:860.1px;top:326px;width:138.70000000000005px;height:16px;background:#f2f2f2;border-right:1px solid #d8dbe0;border-bottom:1px solid #d3d6db"></div><svg style="left:0;top:0;overflow:visible" width="1" height="1"><text transform="translate(862.10,338.12) scale(1.0000,1.090)" font-family="Liberation Sans" font-size="11.8" fill="#151515" style="white-space:pre">Einkaufsauftrag</text></svg><div style="left:998.8000000000001px;top:326px;width:97.09999999999991px;height:16px;background:#f2f2f2;border-right:1px solid #d8dbe0;border-bottom:1px solid #d3d6db"></div><svg style="left:0;top:0;overflow:visible" width="1" height="1"><text transform="translate(1028.39,338.12) scale(1.0000,1.090)" font-family="Liberation Sans" font-size="11.8" fill="#151515" style="white-space:pre">Erfasst</text></svg><div style="left:1095.8999999999999px;top:326px;width:96.10000000000014px;height:16px;background:#f2f2f2;border-right:1px solid #d8dbe0;border-bottom:1px solid #d3d6db"></div><svg style="left:0;top:0;overflow:visible" width="1" height="1"><text transform="translate(1114.26,338.12) scale(1.0000,1.090)" font-family="Liberation Sans" font-size="11.8" fill="#151515" style="white-space:pre">14.11.2015</text></svg><div style="left:1192.0px;top:326px;width:97.0px;height:16px;background:#f2f2f2;border-right:1px solid #d8dbe0;border-bottom:1px solid #d3d6db"></div><svg style="left:0;top:0;overflow:visible" width="1" height="1"><text transform="translate(1273.67,338.12) scale(1.0000,1.090)" font-family="Liberation Sans" font-size="11.8" fill="#151515" style="white-space:pre">40</text></svg><div style="left:1289.0px;top:326px;width:96.79999999999995px;height:16px;background:#f2f2f2;border-right:1px solid #d8dbe0;border-bottom:1px solid #d3d6db"></div><svg style="left:0;top:0;overflow:visible" width="1" height="1"><text transform="translate(1363.92,338.12) scale(1.0000,1.090)" font-family="Liberation Sans" font-size="11.8" fill="#151515" style="white-space:pre">137</text></svg><div style="left:745px;top:342px;width:19.1px;height:15px;background:#e1e4e8;border-bottom:1px solid #c6c9ce;border-right:1px solid #cfd2d7"></div><div style="left:764.1px;top:342px;width:96.0px;height:15px;background:#fff;border-right:1px solid #d8dbe0;border-bottom:1px solid #d3d6db"></div><svg style="left:0;top:0;overflow:visible" width="1" height="1"><text transform="translate(801.66,353.74) scale(1.0000,1.090)" font-family="Liberation Sans" font-size="11.8" fill="#151515" style="white-space:pre">108</text></svg><div style="left:860.1px;top:342px;width:138.70000000000005px;height:15px;background:#fff;border-right:1px solid #d8dbe0;border-bottom:1px solid #d3d6db"></div><svg style="left:0;top:0;overflow:visible" width="1" height="1"><text transform="translate(862.10,353.74) scale(1.0000,1.090)" font-family="Liberation Sans" font-size="11.8" fill="#151515" style="white-space:pre">Kundenauftrag</text></svg><div style="left:998.8000000000001px;top:342px;width:97.09999999999991px;height:15px;background:#fff;border-right:1px solid #d8dbe0;border-bottom:1px solid #d3d6db"></div><svg style="left:0;top:0;overflow:visible" width="1" height="1"><text transform="translate(1030.36,353.74) scale(1.0000,1.090)" font-family="Liberation Sans" font-size="11.8" fill="#151515" style="white-space:pre">Archiv</text></svg><div style="left:1095.8999999999999px;top:342px;width:96.10000000000014px;height:15px;background:#fff;border-right:1px solid #d8dbe0;border-bottom:1px solid #d3d6db"></div><svg style="left:0;top:0;overflow:visible" width="1" height="1"><text transform="translate(1113.82,353.74) scale(1.0000,1.090)" font-family="Liberation Sans" font-size="11.8" fill="#151515" style="white-space:pre">01.12.2015</text></svg><div style="left:1192.0px;top:342px;width:97.0px;height:15px;background:#fff;border-right:1px solid #d8dbe0;border-bottom:1px solid #d3d6db"></div><svg style="left:0;top:0;overflow:visible" width="1" height="1"><text transform="translate(1269.75,353.74) scale(1.0000,1.090)" font-family="Liberation Sans" font-size="11.8" fill="#151515" style="white-space:pre">-50</text></svg><div style="left:1289.0px;top:342px;width:96.79999999999995px;height:15px;background:#fff;border-right:1px solid #d8dbe0;border-bottom:1px solid #d3d6db"></div><svg style="left:0;top:0;overflow:visible" width="1" height="1"><text transform="translate(1370.47,353.74) scale(1.0000,1.090)" font-family="Liberation Sans" font-size="11.8" fill="#151515" style="white-space:pre">87</text></svg><div style="left:745px;top:357px;width:19.1px;height:16px;background:#e1e4e8;border-bottom:1px solid #c6c9ce;border-right:1px solid #cfd2d7"></div><div style="left:764.1px;top:357px;width:96.0px;height:16px;background:#f2f2f2;border-right:1px solid #d8dbe0;border-bottom:1px solid #d3d6db"></div><svg style="left:0;top:0;overflow:visible" width="1" height="1"><text transform="translate(801.66,369.36) scale(1.0000,1.090)" font-family="Liberation Sans" font-size="11.8" fill="#151515" style="white-space:pre">106</text></svg><div style="left:860.1px;top:357px;width:138.70000000000005px;height:16px;background:#f2f2f2;border-right:1px solid #d8dbe0;border-bottom:1px solid #d3d6db"></div><svg style="left:0;top:0;overflow:visible" width="1" height="1"><text transform="translate(862.10,369.36) scale(1.0000,1.090)" font-family="Liberation Sans" font-size="11.8" fill="#151515" style="white-space:pre">Kundenauftrag</text></svg><div style="left:998.8000000000001px;top:357px;width:97.09999999999991px;height:16px;background:#f2f2f2;border-right:1px solid #d8dbe0;border-bottom:1px solid #d3d6db"></div><svg style="left:0;top:0;overflow:visible" width="1" height="1"><text transform="translate(1028.39,369.36) scale(1.0000,1.090)" font-family="Liberation Sans" font-size="11.8" fill="#151515" style="white-space:pre">Erfasst</text></svg><div style="left:1095.8999999999999px;top:357px;width:96.10000000000014px;height:16px;background:#f2f2f2;border-right:1px solid #d8dbe0;border-bottom:1px solid #d3d6db"></div><svg style="left:0;top:0;overflow:visible" width="1" height="1"><text transform="translate(1113.82,369.36) scale(1.0000,1.090)" font-family="Liberation Sans" font-size="11.8" fill="#151515" style="white-space:pre">24.12.2015</text></svg><div style="left:1192.0px;top:357px;width:97.0px;height:16px;background:#f2f2f2;border-right:1px solid #d8dbe0;border-bottom:1px solid #d3d6db"></div><svg style="left:0;top:0;overflow:visible" width="1" height="1"><text transform="translate(1269.75,369.36) scale(1.0000,1.090)" font-family="Liberation Sans" font-size="11.8" fill="#151515" style="white-space:pre">-97</text></svg><div style="left:1289.0px;top:357px;width:96.79999999999995px;height:16px;background:#f2f2f2;border-right:1px solid #d8dbe0;border-bottom:1px solid #d3d6db"></div><svg style="left:0;top:0;overflow:visible" width="1" height="1"><text transform="translate(1366.55,369.36) scale(1.0000,1.090)" font-family="Liberation Sans" font-size="11.8" fill="#c00000" font-weight="bold" style="white-space:pre">-10</text></svg><div style="left:745px;top:373px;width:19.1px;height:15px;background:#e1e4e8;border-bottom:1px solid #c6c9ce;border-right:1px solid #cfd2d7"></div><div style="left:764.1px;top:373px;width:96.0px;height:15px;background:#fff;border-right:1px solid #d8dbe0;border-bottom:1px solid #d3d6db"></div><svg style="left:0;top:0;overflow:visible" width="1" height="1"><text transform="translate(808.23,384.98) scale(1.0000,1.090)" font-family="Liberation Sans" font-size="11.8" fill="#151515" style="white-space:pre">1</text></svg><div style="left:860.1px;top:373px;width:138.70000000000005px;height:15px;background:#fff;border-right:1px solid #d8dbe0;border-bottom:1px solid #d3d6db"></div><svg style="left:0;top:0;overflow:visible" width="1" height="1"><text transform="translate(862.10,384.98) scale(1.0000,1.090)" font-family="Liberation Sans" font-size="11.8" fill="#151515" style="white-space:pre">Fertigungsauftrag</text></svg><div style="left:998.8000000000001px;top:373px;width:97.09999999999991px;height:15px;background:#fff;border-right:1px solid #d8dbe0;border-bottom:1px solid #d3d6db"></div><svg style="left:0;top:0;overflow:visible" width="1" height="1"><text transform="translate(1028.39,384.98) scale(1.0000,1.090)" font-family="Liberation Sans" font-size="11.8" fill="#151515" style="white-space:pre">Erfasst</text></svg><div style="left:1095.8999999999999px;top:373px;width:96.10000000000014px;height:15px;background:#fff;border-right:1px solid #d8dbe0;border-bottom:1px solid #d3d6db"></div><svg style="left:0;top:0;overflow:visible" width="1" height="1"><text transform="translate(1113.82,384.98) scale(1.0000,1.090)" font-family="Liberation Sans" font-size="11.8" fill="#151515" style="white-space:pre">15.01.2016</text></svg><div style="left:1192.0px;top:373px;width:97.0px;height:15px;background:#fff;border-right:1px solid #d8dbe0;border-bottom:1px solid #d3d6db"></div><svg style="left:0;top:0;overflow:visible" width="1" height="1"><text transform="translate(1273.67,384.98) scale(1.0000,1.090)" font-family="Liberation Sans" font-size="11.8" fill="#151515" style="white-space:pre">10</text></svg><div style="left:1289.0px;top:373px;width:96.79999999999995px;height:15px;background:#fff;border-right:1px solid #d8dbe0;border-bottom:1px solid #d3d6db"></div><svg style="left:0;top:0;overflow:visible" width="1" height="1"><text transform="translate(1377.05,384.98) scale(1.0000,1.090)" font-family="Liberation Sans" font-size="11.8" fill="#151515" style="white-space:pre">0</text></svg><div style="left:745px;top:388px;width:18.5px;height:310px;background:repeating-linear-gradient(#f5f6fc 0,#f5f6fc 14.62px,#e8eaef 14.62px,#e8eaef 15.62px);border-right:1px solid #e4e6ec"></div><div style="left:763.5px;top:388px;width:642.0px;height:310px;background:repeating-linear-gradient(#fff 0,#fff 14.62px,#f1f2f4 14.62px,#f1f2f4 15.62px)"></div><div style="left:858.5px;top:388px;width:1px;height:310px;background:#eff0f3"></div><div style="left:997.2px;top:388px;width:1px;height:310px;background:#eff0f3"></div><div style="left:1094.3px;top:388px;width:1px;height:310px;background:#eff0f3"></div><div style="left:1190.4px;top:388px;width:1px;height:310px;background:#eff0f3"></div><div style="left:1287.4px;top:388px;width:1px;height:310px;background:#eff0f3"></div><div style="left:1384.2px;top:388px;width:1px;height:310px;background:#eff0f3"></div><div style="left:744px;top:295.3px;width:1px;height:402.7px;background:#a9abae"></div><div style="left:1404.5px;top:295.3px;width:1px;height:402.7px;background:#b4b6b9"></div><div style="left:744px;top:697px;width:661.5px;height:1px;background:#a9abae"></div><div style="left:744px;top:295.3px;width:661.5px;height:1px;background:#b0b2b5"></div><div style="left:119.3px;top:408.3px;width:788.7px;height:414.5px;background:#fff;border:1px solid #555"></div><svg style="left:136px;top:417px" width="17" height="16" viewBox="0 0 17 16"><defs><linearGradient id="fh3" x1="0" y1="0" x2="0" y2="1"><stop offset="0" stop-color="#eaa0b6"/><stop offset="1" stop-color="#a8385a"/></linearGradient><linearGradient id="fb3" x1="0" y1="0" x2="0" y2="1"><stop offset="0" stop-color="#ffffff"/><stop offset="1" stop-color="#c9d3ea"/></linearGradient></defs><rect x="0.5" y="0.5" width="16" height="15" fill="url(#fb3)" stroke="#a3abbb"/><rect x="0" y="0" width="17" height="3.6" fill="url(#fh3)"/><rect x="0" y="14" width="17" height="2" fill="#3c4662"/><path d="M2 5.6 H7 M2 9.8 H7" stroke="#5c6580" stroke-width="1"/><path d="M2 13 H7" stroke="#c8d0e0" stroke-width="0.8"/><rect x="8.4" y="4.6" width="5" height="4.3" rx="1.4" fill="#d6dff0" stroke="#5d6983" stroke-width="1.1"/><rect x="8.4" y="8.9" width="5" height="4.1" rx="1.4" fill="#d6dff0" stroke="#5d6983" stroke-width="1.1"/></svg><svg style="left:0;top:0;overflow:visible" width="1" height="1"><text transform="translate(377.30,430.40) scale(0.9754,1.000)" font-family="Liberation Sans" font-size="12.8" fill="#444" style="white-space:pre">Artikelblatt für Artikel Nr.4711 | Produkt A</text></svg><svg style="left:826px;top:417px" width="66" height="12" viewBox="0 0 66 12"><rect x="0" y="7" width="10" height="1.5" fill="#333"/><rect x="27.5" y="1" width="9" height="9" fill="none" stroke="#333" stroke-width="1"/><rect x="27" y="0.5" width="10" height="2" fill="#333"/><path d="M54.5 1 L63.5 10 M63.5 1 L54.5 10" stroke="#333" stroke-width="1.7"/></svg><div style="left:127.5px;top:440.3px;width:772.5px;height:374.2px;background:#8c8c8c"></div><div style="left:147.5px;top:480px;width:725px;height:334.5px;background:#fff;border-right:2px solid #cfcfcf"></div><div style="left:127.5px;top:479px;width:20px;height:39px;background:#0c0c0c"></div><div style="left:149.1px;top:462.7px;width:77.9px;height:17.400000000000034px;background:linear-gradient(#f3f3f3,#e4e4e4);border:1px solid #c2c2c2;border-bottom:none"></div><svg style="left:0;top:0;overflow:visible" width="1" height="1"><text transform="translate(171.90,475.50) scale(0.9679,1.050)" font-family="Liberation Sans" font-size="12.3" fill="#111" style="white-space:pre">Übersicht</text></svg><svg style="left:153.5px;top:466px" width="12" height="11" viewBox="0 0 12 11"><rect x="0.5" y="0.5" width="11" height="10" fill="#fff" stroke="#333"/><rect x="0.5" y="0.5" width="11" height="2" fill="#444"/><rect x="0.5" y="0.5" width="2" height="10" fill="#444"/><path d="M2.5 5 H11.5 M2.5 7.5 H11.5 M5.5 2.5 V10.5 M8.5 2.5 V10.5" stroke="#666" stroke-width="0.7" stroke-dasharray="1 1"/></svg><div style="left:227.5px;top:462.7px;width:42.69999999999999px;height:17.400000000000034px;background:linear-gradient(#f3f3f3,#e4e4e4);border:1px solid #c2c2c2;border-bottom:none"></div><svg style="left:0;top:0;overflow:visible" width="1" height="1"><text transform="translate(232.50,475.50) scale(0.9537,1.050)" font-family="Liberation Sans" font-size="12.3" fill="#111" style="white-space:pre">Detail</text></svg><div style="left:271px;top:460.1px;width:63.30000000000001px;height:20.399999999999977px;background:#fff"></div><svg style="left:0;top:0;overflow:visible" width="1" height="1"><text transform="translate(277.10,473.70) scale(0.9650,1.050)" font-family="Liberation Sans" font-size="12.3" fill="#111" style="white-space:pre">Stückliste</text></svg><div style="left:164px;top:509.2px;width:697.5px;height:305.2px;background:#fff"></div><div style="left:165px;top:509.2px;width:696.5px;height:16.099999999999966px;background:#f5f6fb"></div><div style="left:165px;top:509.2px;width:19.400000000000013px;height:16.099999999999966px;background:#dfe2e7"></div><svg style="left:170px;top:512.2px" width="10" height="10" viewBox="0 0 10 10"><path d="M9 0.5 L0.5 9.5 H9 Z" fill="#e6e8ec" stroke="#d0d3d7" stroke-width="0.6"/></svg><div style="left:184.4px;top:509.2px;width:563.7px;height:16.099999999999966px;background:linear-gradient(#fdd663,#ffe783);border-right:1px solid #c9ccd1"></div><svg style="left:0;top:0;overflow:visible" width="1" height="1"><text transform="translate(432.25,520.90) scale(1.0000,1.090)" font-family="Liberation Sans" font-size="11.8" fill="#333" style="white-space:pre">Artikel-Nr.</text></svg><svg style="left:735.2px;top:516.6px" width="7" height="5" viewBox="0 0 7 5"><rect x="0.5" y="0" width="6" height="1" fill="#fff" opacity="0.9"/><path d="M1 1.2 H6 L3.5 4.2 Z" fill="#333"/></svg><div style="left:748.1px;top:509.2px;width:96.89999999999998px;height:16.099999999999966px;background:#dfe2e7;border-right:1px solid #c9ccd1"></div><svg style="left:0;top:0;overflow:visible" width="1" height="1"><text transform="translate(752.37,520.90) scale(1.0000,1.090)" font-family="Liberation Sans" font-size="11.8" fill="#333" style="white-space:pre">Mengenfaktor</text></svg><svg style="left:832.1px;top:516.6px" width="7" height="5" viewBox="0 0 7 5"><rect x="0.5" y="0" width="6" height="1" fill="#fff" opacity="0.9"/><path d="M1 1.2 H6 L3.5 4.2 Z" fill="#333"/></svg><div style="left:165px;top:525px;width:19.400000000000013px;height:16px;background:linear-gradient(#fcd767,#fbd35a);border-bottom:1px solid #c6c9ce;border-right:1px solid #cfd2d7"></div><div style="left:184.4px;top:525px;width:563.7px;height:16px;background:#fff;border-right:1px solid #d8dbe0;border-bottom:1px solid #d3d6db"></div><div style="left:748.1px;top:525px;width:96.89999999999998px;height:16px;background:#b7d8fa;border-right:1px solid #d8dbe0;border-bottom:1px solid #d3d6db"></div><svg style="left:0;top:0;overflow:visible" width="1" height="1"><text transform="translate(836.25,537.40) scale(1.0000,1.090)" font-family="Liberation Sans" font-size="11.8" fill="#151515" style="white-space:pre">1</text></svg><div style="left:165px;top:541px;width:19.400000000000013px;height:15px;background:#e1e4e8;border-bottom:1px solid #c6c9ce;border-right:1px solid #cfd2d7"></div><div style="left:184.4px;top:541px;width:563.7px;height:15px;background:#f2f2f2;border-right:1px solid #d8dbe0;border-bottom:1px solid #d3d6db"></div><svg style="left:0;top:0;overflow:visible" width="1" height="1"><text transform="translate(186.30,553.00) scale(1.0000,1.090)" font-family="Liberation Sans" font-size="11.8" fill="#333" style="white-space:pre">4713   Artikel C</text></svg><div style="left:748.1px;top:541px;width:96.89999999999998px;height:15px;background:#f2f2f2;border-right:1px solid #d8dbe0;border-bottom:1px solid #d3d6db"></div><svg style="left:0;top:0;overflow:visible" width="1" height="1"><text transform="translate(836.25,553.00) scale(1.0000,1.090)" font-family="Liberation Sans" font-size="11.8" fill="#222" style="white-space:pre">2</text></svg><div style="left:165px;top:556px;width:19.400000000000013px;height:16px;background:#e1e4e8;border-bottom:1px solid #c6c9ce;border-right:1px solid #cfd2d7"></div><div style="left:184.4px;top:556px;width:563.7px;height:16px;background:#fff;border-right:1px solid #d8dbe0;border-bottom:1px solid #d3d6db"></div><svg style="left:0;top:0;overflow:visible" width="1" height="1"><text transform="translate(186.30,568.60) scale(1.0000,1.090)" font-family="Liberation Sans" font-size="11.8" fill="#333" style="white-space:pre">4714   Artikel D</text></svg><div style="left:748.1px;top:556px;width:96.89999999999998px;height:16px;background:#fff;border-right:1px solid #d8dbe0;border-bottom:1px solid #d3d6db"></div><svg style="left:0;top:0;overflow:visible" width="1" height="1"><text transform="translate(836.25,568.60) scale(1.0000,1.090)" font-family="Liberation Sans" font-size="11.8" fill="#222" style="white-space:pre">3</text></svg><div style="left:165px;top:572px;width:19.400000000000013px;height:16px;background:#e1e4e8;border-bottom:1px solid #c6c9ce;border-right:1px solid #cfd2d7"></div><svg style="left:168.9px;top:575.5px" width="10" height="10" viewBox="0 0 10 10"><path d="M5 0.5 V9.5 M0.5 5 H9.5 M1.8 1.8 L8.2 8.2 M8.2 1.8 L1.8 8.2" stroke="#111" stroke-width="1"/></svg><div style="left:184.4px;top:572px;width:563.7px;height:16px;background:#f2f2f2;border-right:1px solid #d8dbe0;border-bottom:1px solid #d3d6db"></div><div style="left:748.1px;top:572px;width:96.89999999999998px;height:16px;background:#f2f2f2;border-right:1px solid #d8dbe0;border-bottom:1px solid #d3d6db"></div><svg style="left:0;top:0;overflow:visible" width="1" height="1"><text transform="translate(836.25,584.20) scale(1.0000,1.090)" font-family="Liberation Sans" font-size="11.8" fill="#151515" style="white-space:pre">0</text></svg><div style="left:165px;top:588px;width:18.80000000000001px;height:226.39999999999998px;background:repeating-linear-gradient(#f5f6fc 0,#f5f6fc 14.6px,#e8eaef 14.6px,#e8eaef 15.6px);border-right:1px solid #e4e6ec"></div><div style="left:183.8px;top:588px;width:677.7px;height:226.39999999999998px;background:repeating-linear-gradient(#fff 0,#fff 14.6px,#f1f2f4 14.6px,#f1f2f4 15.6px)"></div><div style="left:746.5px;top:588px;width:1px;height:226.39999999999998px;background:#eff0f3"></div><div style="left:843.4px;top:588px;width:1px;height:226.39999999999998px;background:#eff0f3"></div><div style="left:164px;top:509.2px;width:1px;height:305.2px;background:#a9abae"></div><div style="left:860.5px;top:509.2px;width:1px;height:305.2px;background:#b4b6b9"></div><div style="left:164px;top:813.4px;width:697.5px;height:1px;background:#a9abae"></div><div style="left:164px;top:509.2px;width:697.5px;height:1px;background:#b0b2b5"></div><div style="left:186px;top:526.5px;width:80px;height:13.5px;background:#000"></div><svg style="left:0;top:0;overflow:visible" width="1" height="1"><text transform="translate(186.70,537.40) scale(1.0000,1.090)" font-family="Liberation Sans" font-size="11.8" fill="#fff" style="white-space:pre">4712   Artikel B</text></svg><div style="left:184px;top:525.3px;width:563.5px;height:15.9px;border:1px solid #f2a3aa;border-bottom:1.6px solid #f2a3aa"></div><div style="left:730.3px;top:526.2px;width:16px;height:14px;background:linear-gradient(#f7f7f7,#e4e4e4);border:1px solid #c6c6c6"><svg style="left:3px;top:3.5px" width="9" height="6" viewBox="0 0 9 6"><path d="M0.8 0.8 L4.5 4.8 L8.2 0.8" fill="none" stroke="#333" stroke-width="1.4"/></svg></div></body></html>
